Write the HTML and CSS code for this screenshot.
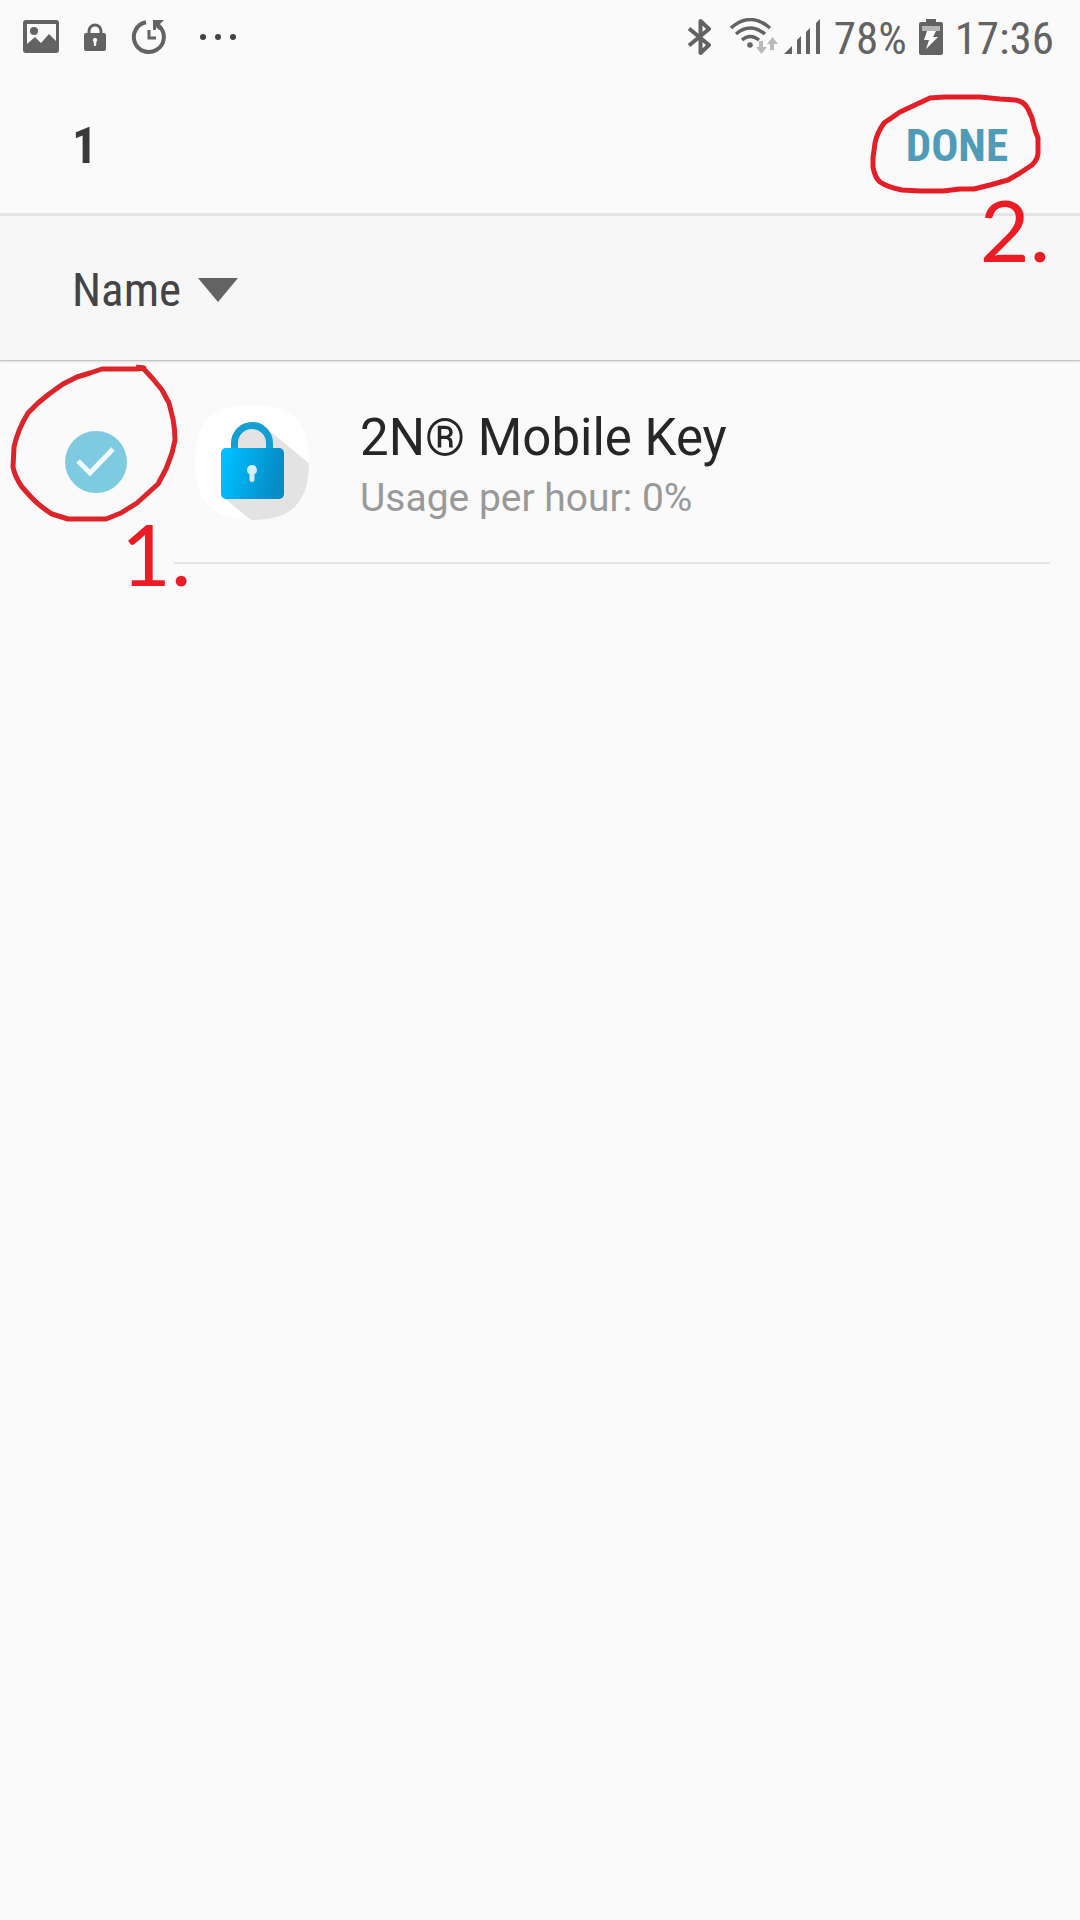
FILE: index.html
```html
<!DOCTYPE html>
<html lang="en">
<head>
<meta charset="utf-8">
<meta name="viewport" content="width=device-width, initial-scale=1">
<title>Select apps</title>
<link rel="stylesheet" href="styles.css">
</head>
<body>
<div class="status">
  <div class="status-notes">
    <svg width="36" height="36" viewBox="0 0 36 36" aria-hidden="true"><path fill="#636363" fill-rule="evenodd" d="M3 1h30q3 0 3 3v27q0 3-3 3H3q-3 0-3-3V4q0-3 3-3zm1 4v20l8-7 6 6 8-9 7 7V5z"/><circle cx="11" cy="12" r="4" fill="#636363"/></svg>
    <svg width="22" height="28" viewBox="0 0 22 28" aria-hidden="true"><path fill="none" stroke="#636363" stroke-width="3" d="M5 11V8a6 6 0 0 1 12 0v3"/><path fill="#636363" fill-rule="evenodd" d="M2 10h18q2 0 2 2v14q0 2-2 2H2q-2 0-2-2V12q0-2 2-2zm9 5a2 2 0 0 0-1.500 3.500L10 23h2l.5-4.500A2 2 0 0 0 11 15z"/></svg>
    <svg width="36" height="36" viewBox="0 0 36 36" aria-hidden="true"><path fill="none" stroke="#636363" stroke-width="4" d="M15 3.300A15 15 0 1 0 29 8"/><path fill="#636363" d="M22 1h11l-4 4 3 4-4 2-3-3v3h-3z"/><path fill="none" stroke="#636363" stroke-width="3" d="M18 11v8h7"/></svg>
    <svg class="more" width="36" height="8" viewBox="0 0 36 8" aria-hidden="true"><g fill="#444"><circle cx="3" cy="4" r="3"/><circle cx="18" cy="4" r="3"/><circle cx="33" cy="4" r="3"/></g></svg>
  </div>
  <div class="status-system">
    <svg class="bluetooth" width="24" height="38" viewBox="0 0 24 38" aria-hidden="true"><path fill="none" stroke="#636363" stroke-width="4" stroke-linejoin="round" d="M1 10.500L21 27l-8.500 8V3L21 11 1 27.500"/></svg>
    <svg class="wifi" width="48" height="38" viewBox="0 0 48 38" aria-hidden="true"><g fill="none" stroke="#636363" stroke-width="3.400"><path d="M1 10Q20-7 40 10M6 16q14-12 29 0M12 22q8-7 17 0"/></g><circle cx="20" cy="27" r="2.800" fill="#636363"/><path fill="#bababa" d="M29 23h4v6h4l-5.500 7L26 29h3zM40 32h4v-6h4l-5.500-7L37 26h3z"/></svg>
    <svg class="signal" width="36" height="38" viewBox="0 0 36 38" aria-hidden="true"><path fill="#636363" d="M0 36l8-8v8zM13 22l4-4v18h-4zM22 14l4-4v26h-4zM32 5l4-4v35h-4z"/></svg>
    <span class="status-text percent">78%</span>
    <svg class="battery" width="24" height="38" viewBox="0 0 24 38" aria-hidden="true"><path fill="#636363" d="M7 1h10v3h5q2 0 2 2v29q0 2-2 2H2q-2 0-2-2V6q0-2 2-2h5z"/><path fill="#b5b5b5" d="M3 8h18v5H3z"/><path fill="#fff" d="M8 13h9l-3 6h5L7 31l3-9H5z"/></svg>
    <span class="status-text">17:36</span>
  </div>
</div>
<header class="header">
  <h1 class="count">1</h1>
  <div class="done-wrap">
    <button class="done" type="button">DONE</button>
    <svg class="ring ring-done" width="180" height="110" viewBox="865 90 180 110" aria-hidden="true"><path transform="translate(850 80)" d="M80 18L50 32 34 43Q27 53 25 63L23 78V87Q25 98 30 102Q37 107 52 110L70 111 93 111 110 109 124 109 140 105 158 100 170 93 182 85Q188 79 188 73V58L185 50 182 38 178 29Q174 21 165 20L150 19 130 17H95L79 18"/></svg>
    <span class="step step-done">2.</span>
  </div>
</header>
<div class="sort">
  <div class="sort-box">
    <select class="sort-select" aria-label="Sort by"><option>Name</option></select>
    <svg class="caret" width="40" height="24" viewBox="0 0 40 24" aria-hidden="true"><path fill="#636363" d="M0 0h40L20 24z"/></svg>
  </div>
</div>
<main>
  <ul class="apps">
    <li class="app">
      <div class="pick">
        <input class="pick-input" type="checkbox" id="app-key" checked>
        <svg class="tick" width="62" height="62" viewBox="0 0 62 62" aria-hidden="true"><path fill="none" stroke="#f0fcff" stroke-width="5" d="M13 30l12 12 23-24"/></svg>
        <svg class="ring ring-pick" width="190" height="170" viewBox="0 360 190 170" aria-hidden="true"><path transform="translate(0 350)" d="M136 17l8 1-7 1H102L90 23 77 27 63 34 49 44 38 53 28 63Q18 79 14 97L13 117Q15 127 22 137L30 146Q39 156 52 164L68 169H106L121 163 137 153 158 134 166 119 172 103 175 90Q175 80 173 69L169 53 162 40 153 29 142 17"/></svg>
        <span class="step step-pick">1.</span>
      </div>
      <label class="app-body" for="app-key">
        <svg class="app-icon" width="116" height="116" viewBox="0 0 116 116" aria-hidden="true">
          <defs>
            <linearGradient id="body" x1="0" y1="0" x2="1" y2="0.200"><stop offset="0.100" stop-color="#00bfff"/><stop offset="1" stop-color="#058bc5"/></linearGradient>
            <clipPath id="tile"><path d="M58 1C98 1 115 18 115 58S98 116 58 116 1 98 1 58 18 1 58 1z"/></clipPath>
          </defs>
          <path fill="#fff" d="M58 1C98 1 115 18 115 58S98 116 58 116 1 98 1 58 18 1 58 1z"/>
          <path clip-path="url(#tile)" fill="#e3e3e3" d="M41 45V36l10-12 12-3 15 8 38 31v56H57L30 94l10-20z"/>
          <path fill="none" stroke="#149fd3" stroke-width="7" d="M40.500 46V39a17.500 17.500 0 0 1 35 0v7"/>
          <rect x="27" y="44" width="63" height="51" rx="5" fill="url(#body)"/>
          <path fill="#d5eef8" d="M58 61a5 5 0 0 0-2.500 9.300V76q0 2 2.500 2t2.500-2v-5.700A5 5 0 0 0 58 61z"/>
        </svg>
        <span class="app-text">
          <span class="app-name">2N® Mobile Key</span>
          <span class="app-usage">Usage per hour: 0%</span>
        </span>
      </label>
    </li>
  </ul>
</main>
</body>
</html>
```
FILE: styles.css
```css
* { box-sizing: border-box; }

body {
  margin: 0;
  min-height: 100vh;
  background: #fafafa;
  font-family: Roboto, "Liberation Sans", sans-serif;
  color: #262626;
}

svg { display: block; flex: none; }

.status,
.header,
.sort-select {
  font-family: "Roboto Condensed", Roboto, sans-serif;
}

.status {
  display: flex;
  justify-content: space-between;
  align-items: center;
  height: 74px;
  padding: 0 26px 0 23px;
}

.status-notes,
.status-system {
  display: flex;
  align-items: center;
}

.status-notes { gap: 25px; }
.more { margin-left: 8px; }
.bluetooth { margin-right: 18px; }
.wifi { margin-right: 6px; }
.signal { margin-right: 14px; }
.percent { margin-right: 12px; }
.battery { margin-right: 12px; }

.status-text {
  padding-top: 3px;
  font-size: 45px;
  line-height: 52px;
  color: #636363;
}

.header {
  display: flex;
  justify-content: space-between;
  align-items: center;
  height: 142px;
  padding: 4px 72px 0;
  border-bottom: 3px solid #e5e5e5;
}

.count {
  margin: 0;
  font-size: 50px;
  line-height: 60px;
  color: #3a3a3a;
}

.done-wrap { position: relative; }

.done {
  display: block;
  padding: 0;
  border: 0;
  background: none;
  font: inherit;
  font-size: 45px;
  font-weight: 700;
  line-height: 60px;
  color: #509cb8;
}

.ring {
  position: absolute;
  pointer-events: none;
  fill: none;
  stroke: #e31e26;
  stroke-width: 5;
  stroke-linejoin: round;
}

.step {
  position: absolute;
  font-family: Lato, sans-serif;
  font-size: 86px;
  line-height: 84px;
  color: #ed1c24;
  pointer-events: none;
}

.ring-done { right: -37px; top: -26px; }
.step-done { right: -42px; top: 71px; }

.sort {
  display: flex;
  align-items: center;
  height: 145px;
  padding: 4px 72px 0;
  background: #f7f7f7;
  border-bottom: 1px solid #c4c4c4;
  box-shadow: 0 1px 2px #dddddd;
}

.sort-box {
  display: flex;
  align-items: center;
  position: relative;
}

.sort-select {
  appearance: none;
  padding: 0 56px 0 0;
  border: 0;
  background: none;
  font-size: 47px;
  line-height: 60px;
  color: #444444;
}

.caret {
  position: absolute;
  right: 0;
  pointer-events: none;
}

.apps {
  margin: 0;
  padding: 0;
  list-style: none;
}

.app {
  display: flex;
  align-items: center;
  padding-right: 30px;
}

.pick {
  position: relative;
  flex: none;
  width: 62px;
  height: 62px;
  margin: 0 47px 2px 65px;
}

.pick-input {
  appearance: none;
  display: block;
  width: 62px;
  height: 62px;
  margin: 0;
  border-radius: 50%;
  background: #7ecae1;
}

.tick {
  position: absolute;
  top: 0;
  left: 0;
  pointer-events: none;
}

.ring-pick { left: -65px; top: -71px; stroke: #dc242b; }
.step-pick { left: 56px; top: 80px; }

.app-body {
  display: flex;
  flex: 1;
  align-items: center;
  gap: 50px;
  height: 203px;
  padding-left: 20px;
  border-bottom: 2px solid #e5e5e5;
}

.app-text {
  display: flex;
  flex-direction: column;
  padding-top: 8px;
}

.app-name {
  font-size: 51px;
  line-height: 64px;
}

.app-usage {
  font-size: 39px;
  line-height: 56px;
  color: #999999;
}
```
